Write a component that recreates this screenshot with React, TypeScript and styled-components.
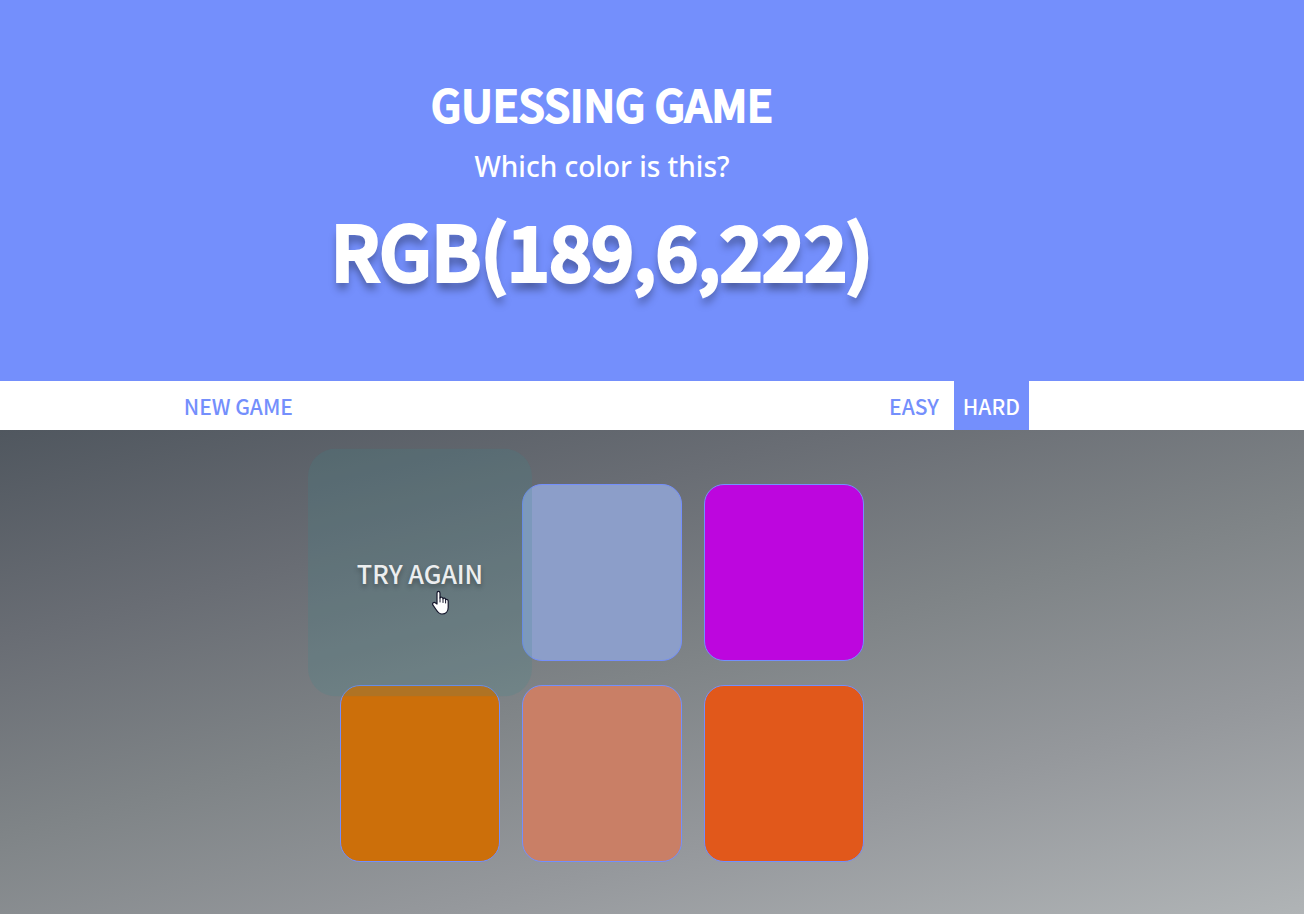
import React from "react";
import styled, { createGlobalStyle, css } from "styled-components";

const Global = createGlobalStyle`
  * { box-sizing: border-box; }
  body {
    margin: 0;
    color: #fff;
    background: #b0b4b6;
    font-family: "Noto Sans CJK SC", "Noto Sans", sans-serif;
  }
  button { font-family: inherit; cursor: pointer; }
`;

const Page = styled.div`
  min-height: 100vh;
  display: flex;
  flex-direction: column;
`;

const Banner = styled.header`
  background: #748ffc;
  padding: 73px 100px 79px 0;
  text-align: center;
`;

const Title = styled.h1`
  margin: 0 0 3px;
  font-size: 43px;
  font-weight: 500;
  line-height: 60px;
  -webkit-text-stroke: 2px #fff;
  stroke-linejoin: round;
`;

const Question = styled.p`
  margin: 0;
  font: 500 28px/60px "Noto Sans", sans-serif;
`;

const Target = styled.h2`
  margin: 0;
  font-size: 74px;
  font-weight: 500;
  line-height: 106px;
  -webkit-text-stroke: 4px #fff;
  stroke-linejoin: round;
  text-shadow: 0 8px 8px rgba(0, 0, 0, 0.4);
`;

const Bar = styled.nav`
  background: #fff;
  display: flex;
  justify-content: space-between;
  padding: 0 21.1% 0 13.4%;
`;

const Modes = styled.div`
  display: flex;
  gap: 6px;
`;

const NavButton = styled.button<{ $active?: boolean }>`
  height: 49px;
  padding: 0 9px;
  border: 0;
  color: #748ffc;
  background: transparent;
  font-size: 21px;
  font-weight: 500;
  line-height: 48px;
  ${(p) => p.$active && css`
    color: #fff;
    background: #748ffc;
  `}
`;

const Board = styled.main`
  flex: 1;
  display: flex;
  justify-content: center;
  padding: 54px 100px 52px 0;
  background: linear-gradient(166deg, #50575f, #696d74 26%, #7f8487 50%, #95989c 73%, #b0b4b6);
`;

const Grid = styled.div`
  display: grid;
  grid-template-columns: repeat(3, 160px);
  grid-auto-rows: 177px;
  gap: 24px 22px;
`;

const Cell = styled.div`
  position: relative;
  z-index: 1;
  display: grid;
`;

const Tile = styled.button<{ $color: string; $missed?: boolean }>`
  padding: 0;
  border: 1px solid #748ffc;
  border-radius: 20px;
  color: #fff;
  background: ${(p) => p.$color};
  ${(p) => p.$missed && css`
    transform: scale(1.4);
    border-color: transparent;
    color: #eceeef;
    font-size: 18px;
    font-weight: 500;
    text-shadow: 0 2px 4px rgba(0, 0, 0, 0.3);
  `}
`;

const Pointer = styled.svg`
  position: absolute;
  left: 92px;
  top: 106px;
  width: 17px;
  height: 25px;
  pointer-events: none;
`;

const tiles = ["#8c9ec9", "#bd06de", "#cc6f0a", "#c97f66", "#e1581b"];

export default function App() {
  return (
    <Page>
      <Global />
      <Banner>
        <Title>GUESSING GAME</Title>
        <Question>Which color is this?</Question>
        <Target>RGB(189,6,222)</Target>
      </Banner>
      <Bar>
        <NavButton>NEW GAME</NavButton>
        <Modes>
          <NavButton>EASY</NavButton>
          <NavButton $active>HARD</NavButton>
        </Modes>
      </Bar>
      <Board>
        <Grid>
          <Cell>
            <Tile $color="rgba(60, 135, 140, 0.2)" $missed>TRY AGAIN</Tile>
            <Pointer viewBox="0 0 17 25" aria-hidden="true">
              <path
                d="M5 14V3.2C5 .8 8 .8 8 3.2V8C8.500 6.700 11 7 11 8.800C11.700 7.600 13.600 8 13.600 9.800C14.500 9 16.200 9.500 16.200 11.300V17.500C16.200 21.500 13.500 24 10 24C6.800 24 5.500 22 4 19.500L1 15.200C-.2 13.200 2 11.500 3.600 13Z"
                fill="#fff" stroke="#14162b" strokeWidth="1.2" strokeLinejoin="round"
              />
              <path d="M8 8V12M11 8.800V12.500M13.600 9.800V13" stroke="#14162b" strokeWidth="1" strokeLinecap="round" />
            </Pointer>
          </Cell>
          {tiles.map((c) => <Tile key={c} $color={c} aria-label={c} />)}
        </Grid>
      </Board>
    </Page>
  );
}
